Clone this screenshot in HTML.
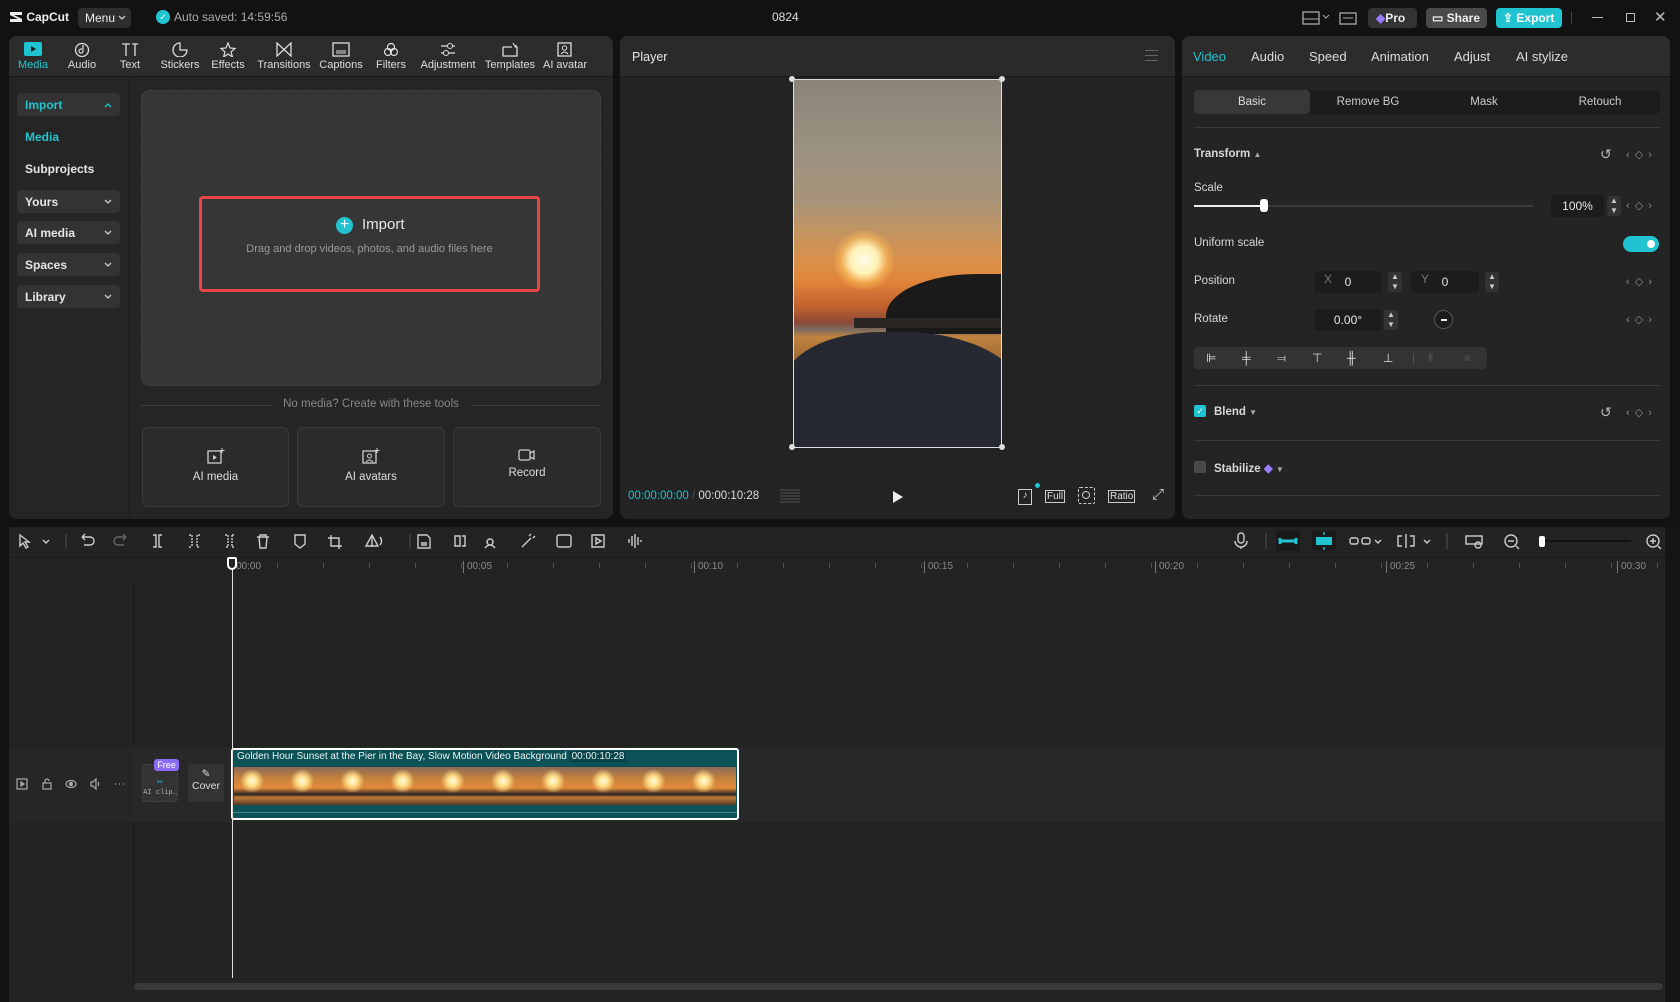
<!DOCTYPE html>
<html><head><meta charset="utf-8"><style>
*{box-sizing:border-box;margin:0;padding:0}
body{width:1680px;height:1002px;background:#121212;font-family:"Liberation Sans",sans-serif;color:#ddd;position:relative;overflow:hidden;font-size:12px}
.a{position:absolute}
.panel{position:absolute;background:#252525;border-radius:8px;overflow:hidden}
.tab{position:absolute;text-align:center;width:60px;font-size:11px;color:#ddd}
.tab svg{display:block;margin:0 auto 2px}
.side{position:absolute;left:17px;width:103px;height:23px;border-radius:4px;background:#333;font-size:12px;font-weight:bold;color:#e6e6e6;padding:5px 8px}
.side svg{position:absolute;right:8px;top:9px}
.rt{position:absolute;font-size:13px;color:#ddd;top:49px}
.lbl{position:absolute;font-size:11.5px;color:#d8d8d8;left:1194px}
.box{position:absolute;background:#1c1c1c;border-radius:4px;font-size:12px;color:#e6e6e6;text-align:center}
.spin{position:absolute;width:14px;height:20px;background:#333;border-radius:3px;color:#ccc;font-size:8px;line-height:10px;text-align:center}
.kf{position:absolute;left:1626px;color:#888;font-size:11px;letter-spacing:1px}
.hr{position:absolute;left:1194px;width:466px;height:1px;background:#3a3a3a}
.rl{position:absolute;top:561px;font-size:10px;color:#8a8a8a;border-left:1px solid #777;padding-left:3px;height:12px;line-height:12px}
</style></head><body>

<!-- top bar -->
<div class="a" style="left:9px;top:10px;font-size:12px;font-weight:bold;color:#eee">
<svg width="14" height="12" style="vertical-align:-2px" viewBox="0 0 14 12"><path d="M1 1h12v3H5l8 4v3H1V8h8L1 4z" fill="#eee"/></svg> CapCut</div>
<div class="a" style="left:78px;top:8px;width:53px;height:20px;background:#2e2e2e;border-radius:4px;font-size:12px;color:#eee;padding:3px 7px;white-space:nowrap">Menu <svg width="8" height="6" style="vertical-align:1px"><path d="M1 1l3 3 3-3" stroke="#ccc" fill="none" stroke-width="1.3"/></svg></div>
<div class="a" style="left:156px;top:10px;width:14px;height:14px;border-radius:50%;background:#1fc4d0;color:#fff;font-size:9px;text-align:center;line-height:14px">✓</div>
<div class="a" style="left:174px;top:10px;font-size:12px;color:#aaa">Auto saved: 14:59:56</div>
<div class="a" style="left:772px;top:10px;font-size:12px;color:#ddd">0824</div>
<svg class="a" style="left:1302px;top:10px" width="56" height="16"><rect x="1" y="2" width="16" height="12" fill="none" stroke="#aaa" stroke-width="1.3"/><line x1="1" y1="9" x2="17" y2="9" stroke="#aaa"/><path d="M21 5l3 3 3-3" stroke="#aaa" fill="none"/><rect x="38" y="3" width="16" height="11" fill="none" stroke="#aaa" stroke-width="1.3"/><line x1="41" y1="8" x2="51" y2="8" stroke="#aaa"/></svg>
<div class="a" style="left:1368px;top:8px;width:49px;height:20px;background:#333;border-radius:4px;font-size:12px;font-weight:bold;color:#eee;padding:3px 8px"><span style="color:#9b7cff">◆</span>Pro</div>
<div class="a" style="left:1426px;top:8px;width:61px;height:20px;background:#4a4a4a;border-radius:4px;font-size:12px;font-weight:bold;color:#eee;padding:3px 6px">▭ Share</div>
<div class="a" style="left:1496px;top:8px;width:66px;height:20px;background:#1fc4d0;border-radius:4px;font-size:12px;font-weight:bold;color:#fff;padding:3px 7px">⇪ Export</div>
<div class="a" style="left:1571px;top:12px;width:1px;height:12px;background:#444"></div>
<div class="a" style="left:1592px;top:17px;width:11px;height:1px;background:#bbb"></div>
<div class="a" style="left:1626px;top:13px;width:9px;height:9px;border:1px solid #bbb"></div>
<div class="a" style="left:1654px;top:8px;font-size:15px;color:#bbb">✕</div>

<!-- left panel -->
<div class="panel" style="left:9px;top:36px;width:604px;height:483px">
 <div class="a" style="left:0;top:0;width:604px;height:41px;background:#2c2c2c;border-bottom:1px solid #1a1a1a"></div>
 <div class="a" style="left:120px;top:41px;width:1px;height:442px;background:#1a1a1a"></div>
</div>
<div class="tab" style="left:3px;top:42px;color:#1fc4d0"><svg width="18" height="15"><rect width="18" height="14" rx="2" fill="#1fc4d0"/><path d="M7 4l5 3-5 3z" fill="#1b1b1b"/></svg>Media</div>
<div class="tab" style="left:52px;top:42px"><svg width="18" height="15"><circle cx="9" cy="8" r="6.5" fill="none" stroke="#ddd" stroke-width="1.3"/><path d="M10 3v6a2 2 0 1 1-1-1.7" fill="none" stroke="#ddd" stroke-width="1.2"/></svg>Audio</div>
<div class="tab" style="left:100px;top:42px"><svg width="18" height="15"><path d="M1 2h8M5 2v12M11 2h6M14 2v12" stroke="#ddd" stroke-width="1.3"/></svg>Text</div>
<div class="tab" style="left:150px;top:42px"><svg width="18" height="15"><path d="M9 1a7 7 0 1 0 7 7h-7z" fill="none" stroke="#ddd" stroke-width="1.3"/></svg>Stickers</div>
<div class="tab" style="left:198px;top:42px"><svg width="18" height="15"><path d="M9 1l2 5 5 .5-4 3.5 1.5 5L9 12l-4.5 3L6 10 2 6.5 7 6z" fill="none" stroke="#ddd" stroke-width="1.2"/></svg>Effects</div>
<div class="tab" style="left:254px;top:42px"><svg width="18" height="15"><path d="M2 1v13l7-6.5L16 14V1L9 7.5z" fill="none" stroke="#ddd" stroke-width="1.3"/></svg>Transitions</div>
<div class="tab" style="left:311px;top:42px"><svg width="18" height="15"><rect x="1" y="1" width="16" height="13" fill="none" stroke="#ddd" stroke-width="1.3"/><path d="M4 9h10M4 11h10" stroke="#ddd"/></svg>Captions</div>
<div class="tab" style="left:361px;top:42px"><svg width="18" height="15"><circle cx="9" cy="5" r="3.5" fill="none" stroke="#ddd" stroke-width="1.2"/><circle cx="6" cy="10" r="3.5" fill="none" stroke="#ddd" stroke-width="1.2"/><circle cx="12" cy="10" r="3.5" fill="none" stroke="#ddd" stroke-width="1.2"/></svg>Filters</div>
<div class="tab" style="left:418px;top:42px"><svg width="18" height="15"><path d="M2 4h14M2 11h14" stroke="#ddd" stroke-width="1.2"/><circle cx="11" cy="4" r="2.5" fill="#2c2c2c" stroke="#ddd"/><circle cx="7" cy="11" r="2.5" fill="#2c2c2c" stroke="#ddd"/></svg>Adjustment</div>
<div class="tab" style="left:480px;top:42px"><svg width="18" height="15"><path d="M2 5h9M14 5h2v9H2V5" fill="none" stroke="#ddd" stroke-width="1.3"/><path d="M12 1l1 2 2 .5-1.5 1.5" stroke="#ddd" fill="none"/></svg>Templates</div>
<div class="tab" style="left:535px;top:42px"><svg width="18" height="15"><rect x="2" y="1" width="13" height="13" fill="none" stroke="#ddd" stroke-width="1.3"/><circle cx="8.5" cy="6" r="2.2" fill="none" stroke="#ddd"/><path d="M5 12q3.5-4 7 0" fill="none" stroke="#ddd"/></svg>AI avatar</div>

<div class="side" style="top:93px;color:#1fc4d0">Import<svg width="8" height="6"><path d="M1 5l3-3 3 3" stroke="#1fc4d0" fill="none" stroke-width="1.3"/></svg></div>
<div class="a" style="left:25px;top:130px;font-size:12px;font-weight:bold;color:#1fc4d0">Media</div>
<div class="a" style="left:25px;top:162px;font-size:12px;font-weight:bold;color:#e6e6e6">Subprojects</div>
<div class="side" style="top:190px">Yours<svg width="8" height="6"><path d="M1 1l3 3 3-3" stroke="#ccc" fill="none" stroke-width="1.3"/></svg></div>
<div class="side" style="top:221px">AI media<svg width="8" height="6"><path d="M1 1l3 3 3-3" stroke="#ccc" fill="none" stroke-width="1.3"/></svg></div>
<div class="side" style="top:253px">Spaces<svg width="8" height="6"><path d="M1 1l3 3 3-3" stroke="#ccc" fill="none" stroke-width="1.3"/></svg></div>
<div class="side" style="top:285px">Library<svg width="8" height="6"><path d="M1 1l3 3 3-3" stroke="#ccc" fill="none" stroke-width="1.3"/></svg></div>

<div class="a" style="left:141px;top:90px;width:460px;height:296px;background:#363636;border-radius:8px;border:1px dashed #444"></div>
<div class="a" style="left:199px;top:196px;width:341px;height:96px;border:3px solid #e84545;border-radius:4px"></div>
<div class="a" style="left:336px;top:217px;width:17px;height:17px;border-radius:50%;background:#1fc4d0;color:#fff;font-size:16px;line-height:16px;text-align:center">+</div>
<div class="a" style="left:362px;top:216px;font-size:15px;color:#e6e6e6">Import</div>
<div class="a" style="left:199px;top:243px;width:341px;text-align:center;font-size:11px;color:#999">Drag and drop videos, photos, and audio files here</div>
<div class="a" style="left:141px;top:405px;width:130px;height:1px;background:#3f3f3f"></div>
<div class="a" style="left:471px;top:405px;width:130px;height:1px;background:#3f3f3f"></div>
<div class="a" style="left:271px;top:398px;width:200px;text-align:center;font-size:11.5px;color:#888">No media? Create with these tools</div>
<div class="a" style="left:142px;top:427px;width:147px;height:80px;border:1px solid #3a3a3a;background:#2b2b2b;border-radius:6px;text-align:center;padding-top:20px;font-size:11.5px;color:#ddd"><svg width="18" height="16"><rect x="1" y="3" width="13" height="12" fill="none" stroke="#ccc" stroke-width="1.3"/><path d="M6 7l4 2.5L6 12z" fill="#ccc"/><path d="M15 0v5M12.5 2.5h5" stroke="#ccc"/></svg><br><span style="position:relative;top:4px">AI media</span></div>
<div class="a" style="left:297px;top:427px;width:148px;height:80px;border:1px solid #3a3a3a;background:#2b2b2b;border-radius:6px;text-align:center;padding-top:20px;font-size:11.5px;color:#ddd"><svg width="18" height="16"><rect x="1" y="3" width="13" height="12" fill="none" stroke="#ccc" stroke-width="1.3"/><circle cx="7.5" cy="8" r="2" fill="none" stroke="#ccc"/><path d="M4 14q3.5-4 7 0" stroke="#ccc" fill="none"/><path d="M15 0v5M12.5 2.5h5" stroke="#ccc"/></svg><br><span style="position:relative;top:4px">AI avatars</span></div>
<div class="a" style="left:453px;top:427px;width:148px;height:80px;border:1px solid #3a3a3a;background:#2b2b2b;border-radius:6px;text-align:center;padding-top:20px;font-size:11.5px;color:#ddd"><svg width="18" height="14"><rect x="1" y="2" width="11" height="10" rx="1.5" fill="none" stroke="#ccc" stroke-width="1.3"/><path d="M12 5l4-2v8l-4-2" fill="none" stroke="#ccc" stroke-width="1.3"/></svg><br><span style="position:relative;top:2px">Record</span></div>

<!-- player -->
<div class="panel" style="left:620px;top:36px;width:555px;height:483px;background:#232323">
 <div class="a" style="left:0;top:0;width:555px;height:41px;background:#2a2a2a;border-bottom:1px solid #1a1a1a"></div>
</div>
<div class="a" style="left:632px;top:50px;font-size:12.5px;color:#e6e6e6">Player</div>
<div class="a" style="left:1145px;top:50px;width:13px;height:11px;border-top:1.5px solid #666;border-bottom:1.5px solid #666"><div style="margin-top:3.5px;height:1.5px;background:#666"></div></div>
<div class="a" style="left:793px;top:79px;width:209px;height:369px;border:1px solid #ddd;overflow:hidden;background:linear-gradient(180deg,#8a8478 0%,#9c9282 20%,#a89478 33%,#c49460 42%,#dc9048 50%,#e0843a 55%,#c0602e 62%,#8a4a36 66%,#7a6a60 68%,#c0843e 70%,#a06a34 76%,#3a302c 80%,#22242c 100%)">
 <div class="a" style="left:40px;top:150px;width:60px;height:60px;border-radius:50%;background:radial-gradient(circle,#fffbe8 0%,#fff2b8 32%,rgba(255,190,90,.55) 55%,rgba(240,140,60,0) 75%)"></div>
 <div class="a" style="left:92px;top:194px;width:130px;height:60px;background:#1a1a1a;border-radius:70% 0 0 0"></div>
 <div class="a" style="left:60px;top:238px;width:160px;height:10px;background:#2a2624"></div>
 <div class="a" style="left:-10px;top:252px;width:240px;height:130px;background:#262931;border-radius:40% 50% 0 0"></div>
</div>
<div class="a" style="left:789px;top:76px;width:6px;height:6px;border-radius:50%;background:#ddd"></div>
<div class="a" style="left:999px;top:76px;width:6px;height:6px;border-radius:50%;background:#ddd"></div>
<div class="a" style="left:789px;top:444px;width:6px;height:6px;border-radius:50%;background:#ddd"></div>
<div class="a" style="left:999px;top:444px;width:6px;height:6px;border-radius:50%;background:#ddd"></div>
<div class="a" style="left:628px;top:490px;font-size:11.5px;color:#1fc4d0">00:00:00:00 <span style="color:#555">/</span> <span style="color:#ddd">00:00:10:28</span></div>
<div class="a" style="left:780px;top:489px;width:20px;height:14px;background:repeating-linear-gradient(180deg,#3a3a3a 0 2px,transparent 2px 3px)"></div>
<svg class="a" style="left:892px;top:490px" width="12" height="14"><path d="M1 1l10 6-10 6z" fill="#eee"/></svg>
<div class="a" style="left:1018px;top:489px;width:14px;height:16px;border:1px solid #ccc;font-size:10px;text-align:center;color:#ddd">♪</div>
<div class="a" style="left:1035px;top:483px;width:5px;height:5px;border-radius:50%;background:#1fc4d0"></div>
<div class="a" style="left:1045px;top:490px;border:1px solid #ccc;font-size:10px;color:#ddd;padding:0 1px">Full</div>
<div class="a" style="left:1078px;top:487px;width:17px;height:17px;border:1.5px dashed #ccc;border-radius:2px"><div style="margin:3px;width:8px;height:8px;border:1.5px solid #ccc;border-radius:50%"></div></div>
<div class="a" style="left:1108px;top:490px;border:1px solid #ccc;font-size:10px;color:#ddd;padding:0 1px">Ratio</div>
<div class="a" style="left:1152px;top:486px;font-size:15px;color:#ccc">⤢</div>

<!-- right panel -->
<div class="panel" style="left:1182px;top:36px;width:488px;height:483px;background:#242424">
 <div class="a" style="left:0;top:0;width:488px;height:41px;background:#2c2c2c;border-bottom:1px solid #1a1a1a"></div>
</div>
<div class="rt" style="left:1193px;color:#1fc4d0">Video</div>
<div class="rt" style="left:1251px">Audio</div>
<div class="rt" style="left:1309px">Speed</div>
<div class="rt" style="left:1371px">Animation</div>
<div class="rt" style="left:1454px">Adjust</div>
<div class="rt" style="left:1516px">AI stylize</div>
<div class="a" style="left:1194px;top:90px;width:466px;height:24px;background:#1c1c1c;border-radius:4px"></div>
<div class="a" style="left:1194px;top:90px;width:116px;height:24px;background:#383838;border-radius:4px"></div>
<div class="a" style="top:96px;left:1194px;width:116px;text-align:center;font-size:11.5px;color:#ddd">Basic</div>
<div class="a" style="top:96px;left:1310px;width:116px;text-align:center;font-size:11.5px;color:#ccc">Remove BG</div>
<div class="a" style="top:96px;left:1426px;width:116px;text-align:center;font-size:11.5px;color:#ccc">Mask</div>
<div class="a" style="top:96px;left:1542px;width:116px;text-align:center;font-size:11.5px;color:#ccc">Retouch</div>
<div class="hr" style="top:127px"></div>
<div class="lbl" style="top:148px;font-weight:bold">Transform <span style="font-size:8px;color:#aaa">▲</span></div>
<div class="a" style="left:1600px;top:146px;font-size:14px;color:#bbb">↺</div>
<div class="kf" style="top:148px">‹ ◇ ›</div>
<div class="lbl" style="top:182px">Scale</div>
<div class="a" style="left:1194px;top:205px;width:339px;height:2px;background:#3a3a3a"></div>
<div class="a" style="left:1194px;top:205px;width:70px;height:2px;background:#eee"></div>
<div class="a" style="left:1260px;top:199px;width:8px;height:13px;background:#fff;border-radius:3px"></div>
<div class="box" style="left:1551px;top:195px;width:53px;height:22px;line-height:22px">100%</div>
<div class="spin" style="left:1607px;top:196px">▲<br>▼</div>
<div class="kf" style="top:199px">‹ ◇ ›</div>
<div class="lbl" style="top:237px">Uniform scale</div>
<div class="a" style="left:1623px;top:236px;width:36px;height:16px;border-radius:8px;background:#1fc4d0"><div style="position:absolute;right:4px;top:4px;width:8px;height:8px;border-radius:50%;background:#fff"></div></div>
<div class="lbl" style="top:275px">Position</div>
<div class="box" style="left:1314px;top:271px;width:68px;height:22px;line-height:22px"><span style="position:absolute;left:10px;color:#777;top:-3px">X</span>0</div>
<div class="spin" style="left:1388px;top:272px">▲<br>▼</div>
<div class="box" style="left:1411px;top:271px;width:68px;height:22px;line-height:22px"><span style="position:absolute;left:10px;color:#777;top:-3px">Y</span>0</div>
<div class="spin" style="left:1485px;top:272px">▲<br>▼</div>
<div class="kf" style="top:275px">‹ ◇ ›</div>
<div class="lbl" style="top:313px">Rotate</div>
<div class="box" style="left:1314px;top:309px;width:68px;height:22px;line-height:22px">0.00°</div>
<div class="spin" style="left:1384px;top:310px">▲<br>▼</div>
<div class="a" style="left:1434px;top:310px;width:19px;height:19px;border-radius:50%;border:1px solid #555;background:#1c1c1c"><div style="margin:8px 0 0 6px;width:6px;height:2px;background:#eee"></div></div>
<div class="kf" style="top:313px">‹ ◇ ›</div>
<div class="a" style="left:1194px;top:347px;width:293px;height:22px;background:#333;border-radius:4px;color:#ddd;font-size:12px;line-height:22px">
<span style="position:absolute;left:12px">⊫</span><span style="position:absolute;left:48px">╪</span><span style="position:absolute;left:83px">⫤</span><span style="position:absolute;left:118px">⊤</span><span style="position:absolute;left:153px">╫</span><span style="position:absolute;left:189px">⊥</span><span style="position:absolute;left:218px;color:#555">|</span><span style="position:absolute;left:234px;color:#555">⫴</span><span style="position:absolute;left:270px;color:#555">≡</span></div>
<div class="hr" style="top:385px"></div>
<div class="a" style="left:1194px;top:405px;width:12px;height:12px;border-radius:2px;background:#1fc4d0;color:#fff;font-size:9px;text-align:center;line-height:12px">✓</div>
<div class="lbl" style="left:1214px;top:406px;font-weight:bold">Blend <span style="font-size:8px;color:#aaa">▼</span></div>
<div class="a" style="left:1600px;top:404px;font-size:14px;color:#bbb">↺</div>
<div class="kf" style="top:406px">‹ ◇ ›</div>
<div class="hr" style="top:440px"></div>
<div class="a" style="left:1194px;top:461px;width:12px;height:12px;border-radius:2px;background:#4a4a4a"></div>
<div class="lbl" style="left:1214px;top:461px;font-weight:bold">Stabilize <span style="color:#9b7cff">◆</span> <span style="font-size:8px;color:#aaa">▼</span></div>
<div class="hr" style="top:495px"></div>

<!-- timeline -->
<div class="a" style="left:9px;top:527px;width:1661px;height:475px;background:#232323"></div>
<div class="a" style="left:9px;top:557px;width:1661px;height:1px;background:#1a1a1a"></div>
<div class="a" style="left:1665px;top:527px;width:15px;height:475px;background:#151515"></div>
<svg class="a" style="left:14px;top:531px" width="700" height="20" fill="none" stroke="#ccc" stroke-width="1.4">
<path d="M6 4l0 11 3-3 3 5 2-1-3-5h4z"/><path d="M29 9l3 3 3-3"/>
<line x1="52" y1="3" x2="52" y2="17" stroke="#444"/>
<path d="M68 6h8a4 4 0 0 1 0 8h-6M68 6l3-3M68 6l3 3"/>
<path d="M112 6h-8a4 4 0 0 0 0 8h6M112 6l-3-3M112 6l-3 3" stroke="#666"/>
<path d="M139 4h3v12h-3M148 4h-3v12h3"/>
<path d="M175 4h3M175 16h3M178 4v12M186 4h-3v12h3" stroke-dasharray="2 1"/>
<path d="M211 4h3v12h-3M218 4h3M218 16h3M218 4v12" stroke-dasharray="2 1"/>
<path d="M243 6h12M246 6V4h6v2M245 6l1 11h6l1-11"/>
<path d="M281 4h10v9l-5 4-5-4z"/>
<path d="M317 4v11h11M314 7h11v11"/>
<path d="M352 15l6-11 6 11zM358 4v12M366 6a6 6 0 0 1 0 8"/>
<line x1="396" y1="3" x2="396" y2="17" stroke="#444"/>
<path d="M404 4h9l3 3v10h-12zM407 12h6M407 14h6"/>
<path d="M441 5h5v10h-5zM448 5h3v10h-3"/>
<path d="M476 8a3 3 0 1 0 0.1 0M471 17q5-6 10 0"/>
<path d="M508 16l9-9M515 5l2-2M519 7l2-2"/>
<rect x="543" y="4" width="14" height="12" rx="2"/>
<path d="M578 4h12v12h-12zM582 7l5 3-5 3z"/>
<path d="M615 8v4M618 5v10M621 3v14M624 6v8M627 9v2"/>
</svg>
<svg class="a" style="left:1230px;top:531px" width="440" height="20" fill="none" stroke="#ccc" stroke-width="1.4">
<rect x="8" y="2" width="6" height="10" rx="3"/><path d="M5 10a6 6 0 0 0 12 0M11 16v2"/>
<line x1="36" y1="2" x2="36" y2="18" stroke="#444"/>
<rect x="46" y="-1" width="24" height="22" rx="3" fill="#1a1a1a" stroke="none"/><path d="M50 10h16M50 7v6M66 7v6" stroke="#1fc4d0" stroke-width="3"/>
<rect x="82" y="-1" width="24" height="22" rx="3" fill="#1a1a1a" stroke="none"/><rect x="86" y="6" width="16" height="8" fill="#1fc4d0" stroke="none"/><path d="M94 1v3M94 16v3" stroke="#1fc4d0"/>
<rect x="120" y="7" width="8" height="6" rx="2"/><rect x="132" y="7" width="8" height="6" rx="2"/><path d="M145 9l3 3 3-3"/>
<path d="M172 5h-4v10h4M176 3v14M180 5h4v10h-4M194 9l3 3 3-3"/>
<line x1="217" y1="2" x2="217" y2="18" stroke="#444"/>
<rect x="236" y="5" width="16" height="8"/><circle cx="248" cy="14" r="3"/>
<circle cx="281" cy="10" r="6"/><path d="M278 10h6M286 15l3 3"/>
<path d="M313 10h88" stroke="#111" stroke-width="2"/><rect x="309" y="5" width="6" height="11" rx="2" fill="#fff" stroke="none"/>
<circle cx="423" cy="10" r="6"/><path d="M420 10h6M423 7v6M428 15l3 3"/>
</svg>

<!-- ruler -->
<div class="rl" style="left:232px">00:00</div>
<div class="rl" style="left:463px">00:05</div>
<div class="rl" style="left:694px">00:10</div>
<div class="rl" style="left:924px">00:15</div>
<div class="rl" style="left:1155px">00:20</div>
<div class="rl" style="left:1386px">00:25</div>
<div class="rl" style="left:1617px">00:30</div>
<div class="a" style="left:232px;top:563px;width:1430px;height:5px;background:repeating-linear-gradient(90deg,transparent 0 45px,#555 45px 46px)"></div>
<div class="a" style="left:133px;top:583px;width:1px;height:400px;background:#1a1a1a"></div>
<div class="a" style="left:9px;top:747px;width:1656px;height:75px;background:#282828"></div>
<div class="a" style="left:9px;top:747px;width:124px;height:75px;background:#262626"></div>
<svg class="a" style="left:16px;top:777px" width="112" height="14" fill="none" stroke="#aaa" stroke-width="1.2">
<rect x="1" y="2" width="10" height="10"/><path d="M5 5l3 2-3 2z" fill="#aaa"/>
<rect x="27" y="6" width="8" height="6"/><path d="M29 6V4a2 2 0 0 1 4 0"/>
<ellipse cx="55" cy="7" rx="5" ry="3.5"/><circle cx="55" cy="7" r="1.5" fill="#aaa"/>
<path d="M75 5h2l3-3v10l-3-3h-2zM82 5q1.5 2 0 4"/>
<path d="M99 7h1M103 7h1M107 7h1"/>
</svg>
<div class="a" style="left:142px;top:764px;width:36px;height:38px;background:#333;border-radius:3px;border:1px dashed #444;font-size:7px;color:#aaa;text-align:center;padding-top:12px;font-family:'Liberation Mono',monospace"><span style="color:#1fc4d0;font-size:10px">✂</span><br>AI clip…</div>
<div class="a" style="left:154px;top:759px;width:25px;height:12px;background:#8b6cf6;border-radius:3px;font-size:9px;color:#fff;text-align:center;line-height:12px">Free</div>
<div class="a" style="left:188px;top:764px;width:36px;height:38px;background:#333;border-radius:3px;font-size:10.5px;color:#ddd;text-align:center;padding-top:4px">✎<br>Cover</div>
<div class="a" style="left:231px;top:748px;width:508px;height:72px;background:#0c5156;border:2px solid #fff;border-radius:3px;overflow:hidden">
 <div style="position:absolute;left:4px;top:1px;font-size:10px;color:#e8f4f4;white-space:nowrap">Golden Hour Sunset at the Pier in the Bay, Slow Motion Video Background <span style="background:#0a4449;padding:0 2px">00:00:10:28</span></div>
 <div style="position:absolute;left:1px;top:17px;width:502px;height:38px;background:radial-gradient(circle at 18px 14px,#fffbe0 0,#ffe08a 5px,rgba(240,150,60,0) 12px) 0 0/50.2px 38px,linear-gradient(180deg,#8a6a58 0%,#c7823c 30%,#e28a3a 55%,#2a2422 72%,#c07a38 80%,#5a3a2a 100%)"></div>
 <div style="position:absolute;left:0;top:62px;width:504px;height:1px;background:#3f8a8e"></div>
</div>
<div class="a" style="left:232px;top:560px;width:1px;height:418px;background:#ddd"></div>
<div class="a" style="left:227px;top:557px;width:10px;height:13px;border:2px solid #fff;border-radius:2px 2px 5px 5px;background:#232323"></div>
<div class="a" style="left:134px;top:983px;width:1529px;height:7px;background:#3a3a3a;border-radius:4px"></div>
</body></html>
